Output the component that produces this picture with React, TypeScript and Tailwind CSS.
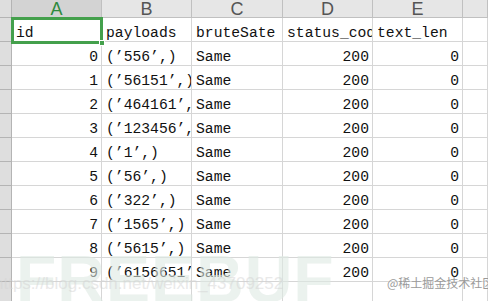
const cols = ["A", "B", "C", "D", "E", ""]
const widths = ["w-[90px]", "w-[90px]", "w-[91px]", "w-[90px]", "w-[90px]", "flex-1"]

type Cell = { text: string; right?: boolean }

const payloads = [
  "(’556’,)",
  "(’56151’,)",
  "(’464161’,",
  "(’123456’,",
  "(’1’,)",
  "(’56’,)",
  "(’322’,)",
  "(’1565’,)",
  "(’5615’,)",
  "(’6156651’",
]

const rows: Cell[][] = [
  [{ text: "id" }, { text: "payloads" }, { text: "bruteSate" }, { text: "status_cod" }, { text: "text_len" }, { text: "" }],
  ...payloads.map((p, i) => [
    { text: String(i), right: true },
    { text: p },
    { text: "Same" },
    { text: "200", right: true },
    { text: "0", right: true },
    { text: "" },
  ]),
  [{ text: "" }, { text: "" }, { text: "" }, { text: "" }, { text: "" }, { text: "" }],
]

export default function App() {
  return (
    <div className="relative w-[488px] h-[301px] overflow-hidden bg-white font-['Liberation_Mono',monospace] text-[14.7px] text-[#111]">
      {/* column headers */}
      <div className="flex h-[18px]">
        <div className="w-[12px] shrink-0 bg-[#dedede] border-r border-b border-[#b4b4b4]" />
        {cols.map((c, i) => (
          <div
            key={i}
            className={`${widths[i]} shrink-0 flex items-center justify-center border-r border-b border-[#c0c0c0] font-['Liberation_Sans',sans-serif] text-[18px] leading-none ${
              i === 0 ? "bg-[#d3d3d3] text-[#2f8a3e]" : "bg-[#e6e6e6] text-[#555]"
            }`}
          >
            {c}
          </div>
        ))}
      </div>

      {/* rows */}
      {rows.map((row, r) => (
        <div key={r} className="flex h-[24px]">
          <div className="w-[12px] shrink-0 bg-[#dedede] border-r border-b border-[#b4b4b4]" />
          {row.map((cell, i) => (
            <div
              key={i}
              className={`${widths[i]} shrink-0 flex items-end overflow-hidden whitespace-nowrap border-r border-b border-[#d6d6d6] leading-[16px] ${
                cell.right ? "justify-end pr-[3px]" : "pl-[4px]"
              }`}
            >
              {cell.text}
            </div>
          ))}
        </div>
      ))}

      {/* selected cell */}
      <div className="absolute left-[11px] top-[17px] w-[92px] h-[27px] border-[3px] border-[#44a04c]">
        <div className="absolute right-[-5px] bottom-[-5px] w-[6px] h-[6px] bg-[#44a04c] border border-white" />
      </div>

      {/* watermarks */}
      <div className="absolute left-[16px] top-[246px] font-['Liberation_Sans',sans-serif] font-bold text-[66px] leading-none tracking-[1px] text-[#dfeae4] opacity-60 pointer-events-none">
        FREEBUF
      </div>
      <div className="absolute left-[-6px] top-[275px] font-['Liberation_Sans',sans-serif] text-[17px] leading-none text-[#d4d4d4] opacity-50 pointer-events-none whitespace-nowrap">
        https://blog.csdn.net/weixin_43709252
      </div>
      <div className="absolute left-[387px] top-[277px] font-['Noto_Sans_CJK_SC',sans-serif] text-[12px] leading-none text-[#9a9a9a] [text-shadow:0_0_2px_#fff] whitespace-nowrap">
        @稀土掘金技术社区
      </div>
    </div>
  )
}
